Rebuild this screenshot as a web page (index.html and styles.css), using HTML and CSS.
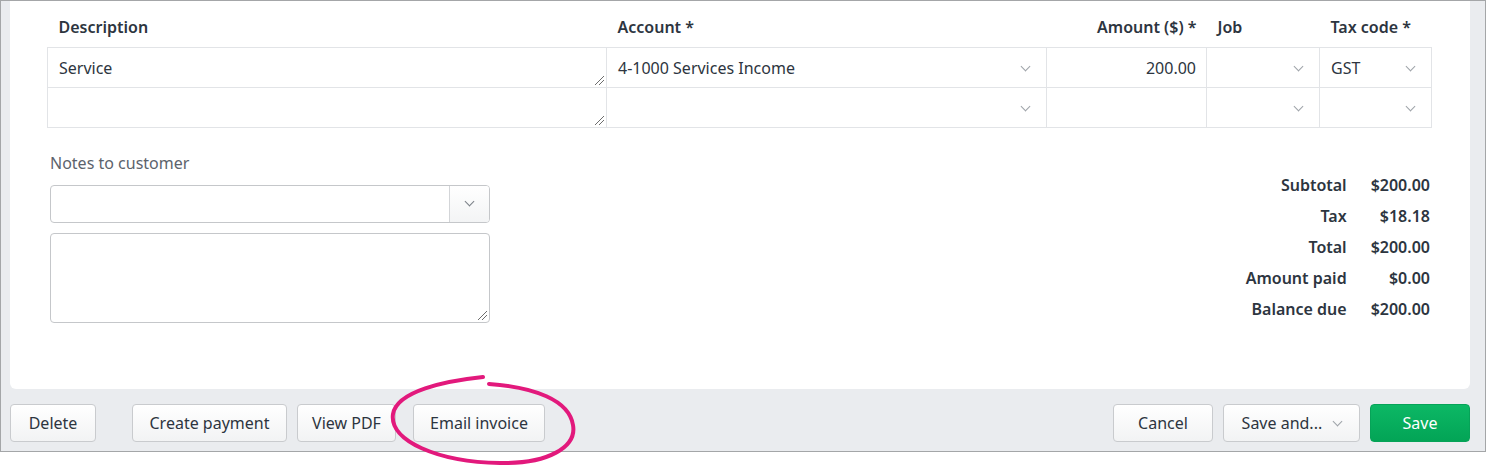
FILE: index.html
```html
<html>
<head>
  <title>Invoice</title>
  <meta name="viewport" content="width=device-width, initial-scale=1.0">
  <link rel="stylesheet" href="styles.css">
</head>
<body>
  <div class="frame">
    <div class="card">
      <table class="lines">
        <colgroup>
          <col class="c-desc"><col class="c-acct"><col class="c-amt"><col class="c-job"><col class="c-tax">
        </colgroup>
        <thead>
          <tr>
            <th>Description</th>
            <th>Account *</th>
            <th class="right">Amount ($) *</th>
            <th>Job</th>
            <th>Tax code *</th>
          </tr>
        </thead>
        <tbody>
          <tr>
            <td class="desc">Service<span class="grip"></span></td>
            <td class="sel">4-1000 Services Income<span class="chev"></span></td>
            <td class="right">200.00</td>
            <td class="sel"><span class="chev"></span></td>
            <td class="sel">GST<span class="chev"></span></td>
          </tr>
          <tr>
            <td class="desc"><span class="grip"></span></td>
            <td class="sel"><span class="chev"></span></td>
            <td class="right"></td>
            <td class="sel"><span class="chev"></span></td>
            <td class="sel"><span class="chev"></span></td>
          </tr>
        </tbody>
      </table>

      <div class="bottom">
        <div class="notes">
          <label>Notes to customer</label>
          <div class="combo">
            <div class="combo-input"></div>
            <div class="combo-btn"><span class="chev dark"></span></div>
          </div>
          <div class="textarea"><span class="grip"></span></div>
        </div>

        <div class="totals">
          <div class="t-label">Subtotal</div><div class="t-value">$200.00</div>
          <div class="t-label">Tax</div><div class="t-value">$18.18</div>
          <div class="t-label">Total</div><div class="t-value">$200.00</div>
          <div class="t-label">Amount paid</div><div class="t-value">$0.00</div>
          <div class="t-label">Balance due</div><div class="t-value">$200.00</div>
        </div>
      </div>
    </div>

    <div class="footer">
      <div class="group">
        <button class="btn btn-delete">Delete</button>
        <button class="btn btn-payment">Create payment</button>
        <button class="btn btn-pdf">View PDF</button>
        <button class="btn btn-email">Email invoice</button>
      </div>
      <div class="group">
        <button class="btn btn-cancel">Cancel</button>
        <button class="btn btn-saveand">Save and... <span class="chev"></span></button>
        <button class="btn btn-save">Save</button>
      </div>
    </div>
  </div>

  <!-- hand drawn highlight round the email button -->
  <svg class="scribble" width="200" height="100" viewBox="380 370 200 100">
    <path d="M483,377 C445,381 397,391 393,414 C389,441 438,462 500,463 C548,464 577,447 573,425 C569,400 534,387 489,384"
          fill="none" stroke="#e2197c" stroke-width="4" stroke-linecap="round"/>
  </svg>
</body>
</html>
```

FILE: styles.css
```css
body {
  margin: 0;
  background: #ffffff;
  font-family: 'Noto Sans', 'Open Sans', Arial, sans-serif;
  color: #2d3540;
  position: relative;
}
.frame {
  width: 1486px;
  height: 452px;
  box-sizing: border-box;
  border: 1px solid #a4a6a8;
  background-color: #eaecef;
  display: flex;
  flex-direction: column;
}
.card {
  background: #ffffff;
  margin: 0 15px 0 9px;
  padding: 0 39px 65px 37px;
  border-radius: 0 0 6px 6px;
  height: 388px;
  box-sizing: border-box;
}
.lines {
  border-collapse: collapse;
  table-layout: fixed;
  width: 1384px;
  font-size: 16px;
}
.c-desc { width: 559px; }
.c-acct { width: 440px; }
.c-amt { width: 160px; }
.c-job { width: 113px; }
.c-tax { width: 112px; }
.lines th {
  height: 46px;
  box-sizing: border-box;
  text-align: left;
  font-weight: 600;
  padding: 0 10px 9px 11px;
  vertical-align: bottom;
}
.lines td {
  border: 1px solid #e2e4e7;
  height: 40px;
  padding: 1px 10px 0 11px;
  position: relative;
  white-space: nowrap;
}
.lines .right { text-align: right; }
.chev {
  display: inline-block;
  width: 6px;
  height: 6px;
  border-right: 1px solid #9ea3a9;
  border-bottom: 1px solid #9ea3a9;
  transform: rotate(45deg);
}
.lines .chev {
  position: absolute;
  right: 17px;
  top: 15px;
}
.chev.dark {
  border-color: #7b8087;
}
.grip {
  position: absolute;
  right: 2px;
  bottom: 2px;
  width: 9px;
  height: 9px;
  background: linear-gradient(135deg, transparent 0 45%, #6d6d6d 45% 52%, transparent 52% 70%, #6d6d6d 70% 77%, transparent 77%);
}
.bottom {
  display: flex;
  justify-content: space-between;
  padding: 24px 1px 0 3px;
}
.notes {
  width: 440px;
}
.notes label {
  display: block;
  font-size: 16px;
  color: #5c636c;
  height: 22px;
  line-height: 22px;
  margin-bottom: 11px;
}
.combo {
  display: flex;
  height: 38px;
  box-sizing: border-box;
  border: 1px solid #c5c7ca;
  border-radius: 4px;
  overflow: hidden;
}
.combo-input { flex: 1; }
.combo-btn {
  width: 39px;
  border-left: 1px solid #d3d5d8;
  background: linear-gradient(#ffffff, #f3f4f5);
  display: flex;
  align-items: center;
  justify-content: center;
}
.combo-btn .chev { margin-top: -4px; }
.textarea {
  position: relative;
  margin-top: 10px;
  height: 90px;
  box-sizing: border-box;
  border: 1px solid #c5c7ca;
  border-radius: 4px;
}
.totals {
  display: grid;
  grid-template-columns: auto auto;
  column-gap: 24px;
  grid-auto-rows: 31px;
  align-items: center;
  font-size: 16px;
  font-weight: 600;
  text-align: right;
  margin-top: 18px;
  height: 155px;
}
.footer {
  flex: 1;
  display: flex;
  justify-content: space-between;
  padding: 15px 15px 0 9px;
}
.group {
  display: flex;
  height: 38px;
}
.btn {
  font-family: inherit;
  font-size: 16px;
  color: #2d3540;
  height: 38px;
  border: 1px solid #c9cbce;
  border-radius: 4px;
  background: linear-gradient(#ffffff, #f2f3f4);
  padding: 0;
  cursor: pointer;
}
.btn-delete { width: 86px; margin-right: 36px; }
.btn-payment { width: 155px; margin-right: 10px; }
.btn-pdf { width: 99px; margin-right: 17px; }
.btn-email { width: 132px; }
.btn-cancel { width: 100px; margin-right: 10px; }
.btn-saveand { width: 137px; margin-right: 10px; }
.btn-saveand .chev {
  margin-left: 8px;
  vertical-align: 4px;
  border-color: #9ea3a9;
}
.btn-save {
  width: 100px;
  color: #ffffff;
  border-color: #06a358;
  background: linear-gradient(#0cb865, #03a456);
}
.scribble {
  position: absolute;
  left: 380px;
  top: 370px;
}
```
